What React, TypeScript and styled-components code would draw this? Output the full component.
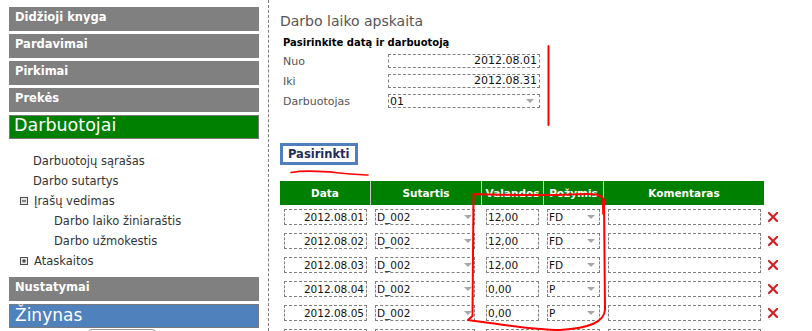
import React from "react";
import styled, { createGlobalStyle } from "styled-components";

const Global = createGlobalStyle`
  html, body { margin: 0; padding: 0; overflow: hidden; background: #fff; }
  body { font-family: "DejaVu Sans", Verdana, sans-serif; }
  * { box-sizing: border-box; }
`;

const Page = styled.div`
  position: relative;
  display: flex;
  align-items: stretch;
  width: 812px;
  height: 331px;
  overflow: hidden;
`;

const Sidebar = styled.nav`
  flex: none;
  width: 269px;
  display: flex;
  flex-direction: column;
  padding: 7px 9px 0 9px;
  border-right: 1px dashed #7a7a7a;
`;

type Variant = "gray" | "green" | "blue";

const MenuBar = styled.div<{ $variant?: Variant }>`
  height: 24px;
  flex: none;
  margin-bottom: 3px;
  color: #fff;
  white-space: nowrap;
  background: ${(p) =>
    p.$variant === "green" ? "#008000" : p.$variant === "blue" ? "#4f81bd" : "#808080"};
  border: ${(p) => (p.$variant && p.$variant !== "gray" ? "1px solid #7a7a7a" : "none")};
  font-weight: ${(p) => (p.$variant && p.$variant !== "gray" ? "normal" : "bold")};
  font-size: ${(p) => (p.$variant === "green" ? "17.5px" : p.$variant === "blue" ? "17px" : "11.5px")};
  line-height: ${(p) => (p.$variant && p.$variant !== "gray" ? "19px" : "16px")};
  padding: ${(p) =>
    p.$variant === "green" ? "0 0 0 4px" : p.$variant === "blue" ? "1px 0 0 5px" : "2px 0 0 6px"};
`;

const SubList = styled.ul`
  list-style: none;
  margin: 9px 0 6px 0;
  padding: 0;
`;

const SubItem = styled.li<{ $indent: number }>`
  display: flex;
  align-items: center;
  height: 20px;
  padding-left: ${(p) => p.$indent}px;
  font-size: 11.5px;
  color: #333;
  white-space: nowrap;
`;

const Toggle = styled.svg`
  width: 8px;
  height: 8px;
  margin-right: 6px;
  flex: none;
`;

const SearchBox = styled.div`
  align-self: flex-start;
  margin: -2px 0 0 79px;
  width: 68px;
  height: 14px;
  border: 1px solid #999;
  border-radius: 4px;
  flex: none;
`;

const Main = styled.main`
  flex: 1;
  padding: 12px 0 0 11px;
`;

const Title = styled.h1`
  margin: 0;
  font-weight: normal;
  font-size: 14px;
  line-height: 18px;
  color: #555;
`;

const Subhead = styled.div`
  margin: 6px 0 1px 3px;
  font-weight: bold;
  font-size: 10px;
  line-height: 14px;
  color: #000;
`;

const FormRow = styled.div`
  display: flex;
  align-items: center;
  height: 20px;
  margin-left: 3px;
`;

const Label = styled.div`
  width: 105px;
  font-size: 11px;
  color: #555;
`;

const Field = styled.div<{ $w: number; $h: number; $align?: "left" | "right"; $fs?: number }>`
  width: ${(p) => p.$w}px;
  height: ${(p) => p.$h}px;
  border: 1px dashed #808080;
  font-size: ${(p) => p.$fs ?? 11}px;
  line-height: ${(p) => p.$h - 2}px;
  color: #111;
  text-align: ${(p) => p.$align ?? "left"};
  padding: ${(p) => (p.$align === "right" ? "0 2px 0 0" : "0 0 0 1px")};
  white-space: nowrap;
  overflow: hidden;
`;

const Select = styled.div<{ $w: number; $h: number; $fs?: number }>`
  width: ${(p) => p.$w}px;
  height: ${(p) => p.$h}px;
  border: 1px dashed #808080;
  display: flex;
  align-items: center;
  justify-content: space-between;
  font-size: ${(p) => p.$fs ?? 11}px;
  color: #111;
  padding-left: 1px;
  white-space: nowrap;
`;

const Arrow = styled.span<{ $right: number }>`
  width: 0;
  height: 0;
  margin-right: ${(p) => p.$right}px;
  border-left: 4px solid transparent;
  border-right: 4px solid transparent;
  border-top: 4px solid #a6a6a6;
`;

const Button = styled.button`
  display: block;
  margin: 32px 0 0 0;
  height: 22px;
  padding: 1px 5px 0;
  border: 3px solid #4f7fbf;
  background: #fff;
  font-family: inherit;
  font-weight: bold;
  font-size: 11.5px;
  line-height: 15px;
  color: #1f2d5b;
`;

const Table = styled.div`
  margin-top: 16px;
  display: grid;
  grid-template-columns: 91px 111px 62px 60px 160px 24px;
  grid-auto-rows: 24px;
  width: 508px;
`;

const HeadCell = styled.div<{ $sep?: boolean; $blank?: boolean }>`
  background: ${(p) => (p.$blank ? "transparent" : "#008000")};
  color: #fff;
  font-weight: bold;
  font-size: 10.5px;
  line-height: 24px;
  text-align: center;
  border-right: ${(p) => (p.$sep ? "1px solid #c8c8c8" : "none")};
  white-space: nowrap;
`;

const Cell = styled.div<{ $pl: number }>`
  padding: 4px 0 0 ${(p) => p.$pl}px;
`;

const DelCell = styled.div`
  display: flex;
  align-items: center;
  padding-left: 4px;
`;

const DelIcon = styled.svg`
  width: 10px;
  height: 10px;
`;

const Overlay = styled.svg`
  position: absolute;
  left: 0;
  top: 0;
  width: 812px;
  height: 331px;
  pointer-events: none;
`;

const rows = [
  ["2012.08.01", "D_002", "12,00", "FD"],
  ["2012.08.02", "D_002", "12,00", "FD"],
  ["2012.08.03", "D_002", "12,00", "FD"],
  ["2012.08.04", "D_002", "0,00", "P"],
  ["2012.08.05", "D_002", "0,00", "P"],
];

const ToggleIcon = ({ plus }: { plus?: boolean }) => (
  <Toggle viewBox="0 0 8 8">
    <rect x="0.5" y="0.5" width="7" height="7" fill="#e6e6e6" stroke="#4a4a4a" />
    <line x1="2" y1="4" x2="6" y2="4" stroke="#222" strokeWidth="1" />
    {plus && <line x1="4" y1="2" x2="4" y2="6" stroke="#222" strokeWidth="1" />}
  </Toggle>
);

const Del = () => (
  <DelIcon viewBox="0 0 10 10">
    <path d="M1 1 L9 9 M9 1 L1 9" stroke="#d71d1d" strokeWidth="2.1" strokeLinecap="square" />
  </DelIcon>
);

export default function App() {
  return (
    <Page>
      <Global />
      <Sidebar>
        <MenuBar>Didžioji knyga</MenuBar>
        <MenuBar>Pardavimai</MenuBar>
        <MenuBar>Pirkimai</MenuBar>
        <MenuBar>Prekės</MenuBar>
        <MenuBar $variant="green">Darbuotojai</MenuBar>
        <SubList>
          <SubItem $indent={24}>Darbuotojų sąrašas</SubItem>
          <SubItem $indent={24}>Darbo sutartys</SubItem>
          <SubItem $indent={11}>
            <ToggleIcon />
            Įrašų vedimas
          </SubItem>
          <SubItem $indent={45}>Darbo laiko žiniaraštis</SubItem>
          <SubItem $indent={45}>Darbo užmokestis</SubItem>
          <SubItem $indent={11}>
            <ToggleIcon plus />
            Ataskaitos
          </SubItem>
        </SubList>
        <MenuBar>Nustatymai</MenuBar>
        <MenuBar $variant="blue">Žinynas</MenuBar>
        <SearchBox />
      </Sidebar>
      <Main>
        <Title>Darbo laiko apskaita</Title>
        <Subhead>Pasirinkite datą ir darbuotoją</Subhead>
        <FormRow>
          <Label>Nuo</Label>
          <Field $w={152} $h={14} $align="right">2012.08.01</Field>
        </FormRow>
        <FormRow>
          <Label>Iki</Label>
          <Field $w={152} $h={14} $align="right">2012.08.31</Field>
        </FormRow>
        <FormRow>
          <Label>Darbuotojas</Label>
          <Select $w={152} $h={14}>
            01
            <Arrow $right={5} />
          </Select>
        </FormRow>
        <Button>Pasirinkti</Button>
        <Table>
          <HeadCell $sep>Data</HeadCell>
          <HeadCell $sep>Sutartis</HeadCell>
          <HeadCell $sep>Valandos</HeadCell>
          <HeadCell $sep>Požymis</HeadCell>
          <HeadCell>Komentaras</HeadCell>
          <HeadCell $blank />
          {rows.map((r) => (
            <React.Fragment key={r[0]}>
              <Cell $pl={4}>
                <Field $w={83} $h={16} $align="right" $fs={10.5}>{r[0]}</Field>
              </Cell>
              <Cell $pl={4}>
                <Select $w={100} $h={16} $fs={10.5}>
                  {r[1]}
                  <Arrow $right={2} />
                </Select>
              </Cell>
              <Cell $pl={4}>
                <Field $w={53} $h={16} $fs={10.5}>{r[2]}</Field>
              </Cell>
              <Cell $pl={3}>
                <Select $w={53} $h={16} $fs={10.5}>
                  {r[3]}
                  <Arrow $right={4} />
                </Select>
              </Cell>
              <Cell $pl={4}>
                <Field $w={153} $h={16} />
              </Cell>
              <DelCell>
                <Del />
              </DelCell>
            </React.Fragment>
          ))}
          {/* empty row for a new entry */}
          <Cell $pl={4}>
            <Field $w={83} $h={16} $align="right" $fs={10.5} />
          </Cell>
          <Cell $pl={4}>
            <Select $w={100} $h={16} $fs={10.5}>
              <Arrow $right={2} />
            </Select>
          </Cell>
          <Cell $pl={4}>
            <Field $w={53} $h={16} $fs={10.5} />
          </Cell>
          <Cell $pl={3}>
            <Select $w={53} $h={16} $fs={10.5}>
              <Arrow $right={4} />
            </Select>
          </Cell>
          <Cell $pl={4}>
            <Field $w={153} $h={16} />
          </Cell>
          <DelCell />
        </Table>
      </Main>
      <Overlay viewBox="0 0 812 331">
        <g fill="none" stroke="#ff0000" strokeLinecap="round" strokeLinejoin="round">
          <path d="M548.5 46 L548.5 125" strokeWidth="2" />
          <path d="M291 172.5 C 303 170.5, 320 171, 337 172.7 S 360 174.5, 368 175" strokeWidth="1.6" />
          <path
            d="M473.5 194 C 500 194.5, 540 196, 570 194.5 S 600 194.5, 604 200 L 605 310 C 604 322, 590 328, 560 330 C 530 330, 500 324, 468 320 L 472.5 316 L 473.5 194"
            strokeWidth="2"
          />
          <path d="M602.5 198 L603 214" strokeWidth="1.5" />
        </g>
      </Overlay>
    </Page>
  );
}
